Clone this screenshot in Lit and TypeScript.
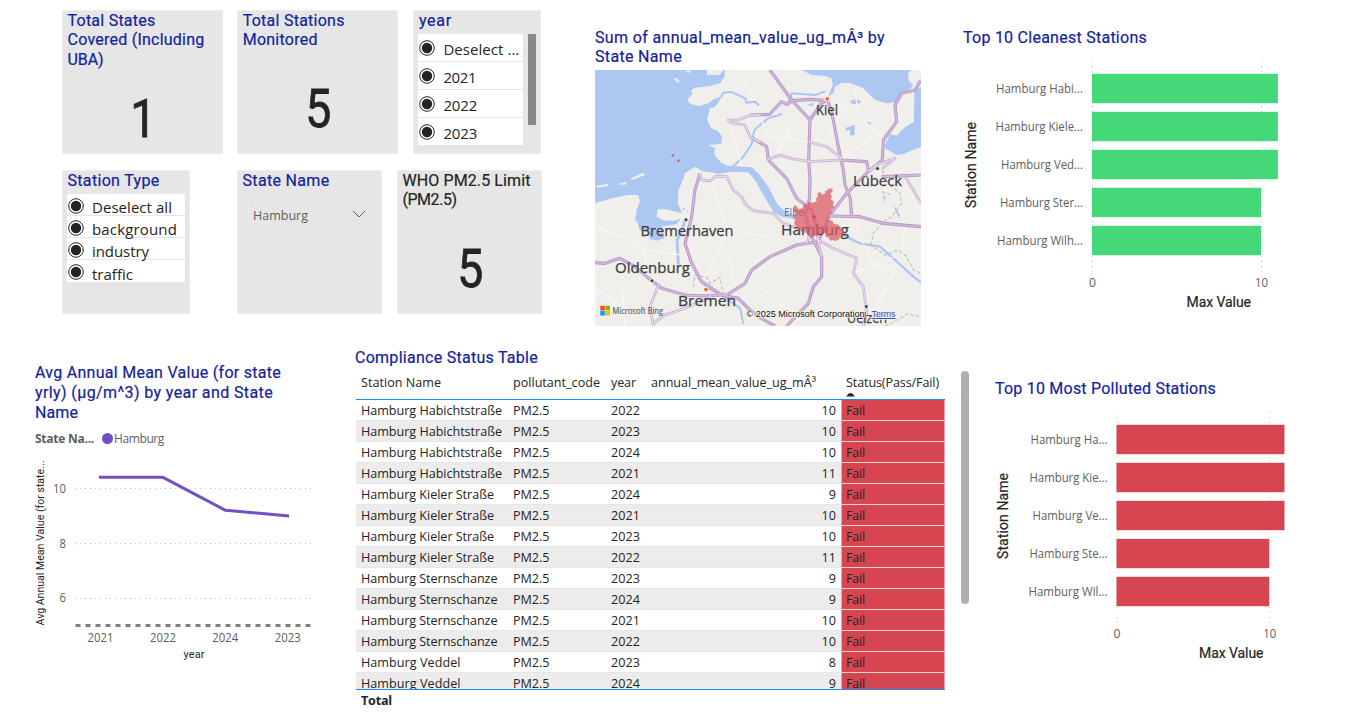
import { LitElement, html, svg, css } from "lit";
import { customElement, property, state } from "lit/decorators.js";
import { classMap } from "lit/directives/class-map.js";

/** One line of text whose tracking is adjusted so that it spans `w` pixels. */
@customElement("fit-line")
class FitLine extends LitElement {
  @property({ type: Number }) w = 0;
  static styles = css`
    :host { display: block; white-space: pre; overflow: visible; }
    .line { display: inline-block; }
  `;
  render() {
    return html`<span class="line"><slot></slot></span>`;
  }
  firstUpdated() {
    const line = this.renderRoot.querySelector(".line") as HTMLElement;
    const count = (this.textContent ?? "").length;
    const natural = line.getBoundingClientRect().width;
    if (count && this.w) line.style.letterSpacing = `${(this.w - natural) / count}px`;
  }
}

@customElement("kpi-card")
class KpiCard extends LitElement {
  @property({ attribute: false }) lines: [string, number][] = [];
  @property() value = "";
  @property({ type: Boolean }) dark = false;
  static styles = css`
    :host { display: flex; flex-direction: column; box-sizing: border-box; height: 144px;
      background: #e6e6e6; border: 1px solid #ededed; font-family: Roboto, sans-serif; }
    .title { padding: 0 4.5px; font-size: 16px; line-height: 19.4px; color: #12239e; -webkit-text-stroke: .2px; }
    .dark { color: #252423; }
    .value { flex: 1; display: flex; align-items: center; justify-content: center; padding: 16px 0 0 1px;
      font-size: 54px; line-height: 54px; color: #252423; }
    .digit { display: block; transform: scaleX(.86); -webkit-text-stroke: .8px; }
  `;
  render() {
    return html`<div class=${classMap({ title: true, dark: this.dark })}>
        ${this.lines.map(([t, w]) => html`<fit-line w=${w}>${t}</fit-line>`)}
      </div>
      <div class="value"><span class="digit">${this.value}</span></div>`;
  }
}

@customElement("slicer-list")
class SlicerList extends LitElement {
  @property() heading = "";
  @property({ type: Number }) headingWidth = 0;
  @property({ attribute: false }) items: [string, number][] = [];
  @property({ type: Boolean, reflect: true }) compact = false;
  static styles = css`
    :host { display: block; box-sizing: border-box; height: 144px; width: 128px;
      background: #e6e6e6; border: 1px solid #ededed; }
    .title { padding: 0 4.5px; font: 16px/19.4px Roboto, sans-serif; color: #12239e; -webkit-text-stroke: .2px; }
    .body { display: flex; gap: 5px; padding: 4px 4px 0 4px; }
    .list { width: 105px; }
    .item { height: 28px; box-sizing: border-box; border-bottom: 1px solid #e6e6e6; background: #fff;
      display: flex; align-items: center; gap: 8px; padding-left: 1px;
      font: 15px/20px 'Open Sans', sans-serif; color: #252423; }
    .label { padding-top: 3px; }
    .thumb { width: 8px; height: 91px; background: #8a8886; }
    .compact .list { width: 118px; }
    .compact .item { height: 22px; padding-top: 2px; }
    .compact .item:last-child { height: 23px; }
    .radio { flex: none; }
  `;
  render() {
    return html`<div class="title"><fit-line w=${this.headingWidth}>${this.heading}</fit-line></div>
      <div class=${classMap({ body: true, compact: this.compact })}>
        <div class="list">
          ${this.items.map(([t, w]) => html`<div class="item">
            <svg class="radio" width="16" height="16" viewBox="0 0 16 16">
              <circle cx="8" cy="8" r="7.3" fill="#fff" stroke="#252423" stroke-width="1"></circle>
              <circle cx="8" cy="8" r="5.2" fill="#252423"></circle>
            </svg>
            <fit-line class="label" w=${w}>${t}</fit-line>
          </div>`)}
        </div>
        ${this.compact ? "" : html`<div class="thumb"></div>`}
      </div>`;
  }
}

const roads = [
  "M525 0L590 90L645 150L641 270L645 330L643 390L630 430L645 490L680 560L680 620L655 650L640 700L575 768",
  "M465 135L525 133L540 115L560 95L575 103L595 92L645 88L695 92L680 98L645 150",
  "M700 95L715 150L728 220L745 300L750 345L766 385L770 440",
  "M978 30L960 60L920 70L900 105L905 155L865 210L862 270L820 305L755 370L705 435L670 515L605 525L525 560L470 600L450 640L395 675L380 675L320 635L290 580L270 520L290 440L300 360L315 310",
  "M380 675L330 678L270 675L200 655L155 620L120 590L75 565L30 580L0 578",
  "M465 200L515 230L520 270L575 325L605 385L650 420L670 490",
  "M705 438L795 440L865 460L978 470",
  "M860 320L978 315",
  "M380 675L430 685L460 715L490 740L540 768",
  "M735 270L815 275L820 300",
];
const minorRoads = [
  "M515 270L555 255L595 267L645 275L735 270",
  "M643 215L695 230L740 265",
  "M495 135L460 138L430 150L400 150L405 158L450 165L465 200L495 215",
  "M315 310L320 330L345 333L360 320L395 320L415 360L440 380L450 400L470 420L495 425L535 430L565 460L620 480L650 490",
  "M190 645L165 710L175 768M175 760L210 735L270 715L350 680",
  "M670 510L715 535L785 565L775 610L805 650L815 730L805 768",
  "M820 305L845 285L900 265L890 275L860 295",
  "M930 320L955 360L978 400",
  "M635 520L645 490L665 490L680 560",
];
const whiteRoads = "M0 470L80 500L150 540L155 620M150 540L300 560M0 650L120 740M80 660L90 768M350 330L400 480L340 610M400 480L520 500M480 640L560 700L600 768M400 560L420 650M500 150L520 200L640 215M595 160L540 260M760 100L700 190M800 150L860 200M780 60L790 140M735 270L850 190M700 640L900 560M900 600L850 700L870 768M700 600L600 640M780 450L830 580L900 600M930 470L920 560M440 20L480 90M410 180L440 290";

@customElement("state-map")
class StateMap extends LitElement {
  static styles = css`
    :host { display: block; }
    .map { display: block; }
    .city { font-family: 'Open Sans', sans-serif; fill: #404040; stroke: #404040; stroke-width: .25px; }
    .water { font-family: 'Open Sans', sans-serif; fill: #4673bd; }
    .legal { font-family: 'Liberation Sans', sans-serif; font-size: 9.3px; fill: #111; stroke: #f4f3f0; stroke-width: 1.6px; paint-order: stroke; }
    .terms { fill: #2149b8; text-decoration: underline; }
    .logo { font-family: 'Open Sans', sans-serif; font-size: 8.5px; fill: #666; stroke: #666; stroke-width: .2px; }
  `;
  render() {
    const city = (x: number, y: number, w: number, t: string) =>
      svg`<text class="city" x=${x} y=${y} textLength=${w} lengthAdjust="spacingAndGlyphs" font-size="14">${t}</text>`;
    return html`<svg class="map" width="326" height="256" viewBox="0 0 978 768">
      <rect width="978" height="768" fill="#f0efec"></rect>
      <g fill="#acc7f2">
        <path d="M0 0H390L388 20L375 40L350 47L300 53L288 62L292 72L278 88L282 100L310 108L340 100L355 88L378 80L372 95L358 112L345 115L336 150L348 175L368 182L382 200L378 222L340 225L360 235L358 255L380 280L400 288L450 290L470 292L490 310L520 350L545 400L570 425L600 436L598 446L560 440L535 425L505 375L480 330L460 307L410 305L370 312L340 305L325 305L300 290L270 310L264 330L250 360L248 400L262 430L245 425L210 418L188 418L185 440L210 452L240 452L258 445L245 462L200 470L205 482L208 505L185 512L165 508L160 485L133 480L128 455L120 450L125 420L135 395L130 375L100 375L50 385L0 400Z"></path>
        <path d="M620 0L650 15L690 18L710 25L713 45L700 80L715 70L720 50L740 38L765 38L805 55L840 90L875 100L905 95L920 65L943 58L955 48L940 30L940 10L950 0Z"></path>
        <path d="M958 62L978 50V230L940 246L925 252L905 255L870 235L870 225L885 192L905 197L930 172L957 155Z"></path>
        <path d="M765 93L785 87L800 95L785 103L770 101ZM752 173L780 165L778 195L765 197L765 180L752 182ZM814 155L830 158L826 165ZM635 105L655 98L655 108ZM895 405L915 435L912 445L900 420ZM865 375L872 380L868 398Z"></path>
      </g>
      <g fill="none" stroke="#acc7f2" stroke-linecap="round" stroke-linejoin="round">
        <path stroke-width="9" d="M270 450L260 485L246 510L250 580"></path>
        <path stroke-width="6" d="M378 82L385 68L410 66L430 75L450 85L455 98L480 95L490 105M415 288L445 260L470 222L478 180L495 165L520 145L560 132M310 625L340 655L380 675L435 715L445 760M580 95L590 70L620 72L660 75L690 65"></path>
        <path stroke-width="7" d="M742 495L795 520L855 530L895 565L955 620L978 637"></path>
      </g>
      <g fill="#f0efec">
        <path d="M336 0H385L375 14L336 16ZM236 23Q248 22 254 36L246 38ZM5 347L40 341L38 349L5 353ZM65 343L95 337L93 344ZM108 325L145 308L150 315L112 330ZM270 4L290 1L282 9Z"></path>
      </g>
      <path d=${whiteRoads} fill="none" stroke="#f8f7f6" stroke-width="4"></path>
      <path d="M262 415L280 425M295 650L300 615L335 622L345 640L375 622L385 670M862 300L880 340L915 370L920 400L890 440L865 455L835 490L828 525M790 520L828 525L870 555L910 540L935 560L955 600L978 610M860 365L890 375M870 768L915 745L935 732L978 740" fill="none" stroke="#c4c1ba" stroke-width="3.5" stroke-dasharray="11 6"></path>
      <g fill="none" stroke-linejoin="round">
        ${roads.map((d) => svg`<path d=${d} stroke="#b795c7" stroke-width="9.5"></path>`)}
        ${minorRoads.map((d) => svg`<path d=${d} stroke="#c3a8d0" stroke-width="8"></path>`)}
        ${roads.map((d) => svg`<path d=${d} stroke="#d3bcdc" stroke-width="4"></path>`)}
        ${minorRoads.map((d) => svg`<path d=${d} stroke="#eadff0" stroke-width="3.6"></path>`)}
      </g>
      <g transform="translate(-1785 -210) scale(3)">
        ${city(816, 115, 22, "Kiel")}
        ${city(853, 185.5, 49, "Lübeck")}
        ${city(640.5, 236, 93, "Bremerhaven")}
        ${city(615, 273, 75, "Oldenburg")}
        ${city(678, 306, 58, "Bremen")}
        ${city(781, 234.5, 68, "Hamburg")}
        ${city(847, 322.5, 40, "Uelzen")}
        <text class="water" x="784" y="216" font-size="10" textLength="20" lengthAdjust="spacingAndGlyphs">Elbe</text>
        <g fill="#444" stroke="#f7f6f4" stroke-width=".8">
          <circle cx="877.5" cy="168.6" r="2"></circle><circle cx="686" cy="219.8" r="2"></circle>
          <circle cx="652" cy="280.8" r="2"></circle><circle cx="866.3" cy="306.6" r="2"></circle>
        </g>
        <g fill="#f26b2e" stroke="#fff" stroke-width="1">
          <circle cx="827.3" cy="99" r="2.4"></circle><circle cx="706" cy="289.5" r="2.4"></circle>
        </g>
      </g>
      <path d="M594 412L602 406L612 418L622 415L628 402L637 404L640 396L652 398L665 394L663 386L669 378L667 370L675 366L682 374L691 370L690 362L698 362L697 357L712 355L713 364L706 372L711 380L707 387L717 396L713 404L719 414L709 418L711 428L702 434L704 442L699 449L712 452L717 462L731 464L735 474L745 480L747 492L735 498L733 508L722 513L712 510L706 512L700 502L692 500L691 488L680 492L672 490L668 498L658 497L653 504L644 500L640 490L632 488L627 480L610 482L606 470L597 462L601 450L594 442L602 432L597 424Z" fill="#de5a67" fill-opacity=".74"></path>
      <circle cx="657" cy="440" r="5" fill="#ee3b34"></circle>
      <path d="M228 258L237 250L236 260ZM246 270L255 269L253 276L247 275Z" fill="#d9536b"></path>
      <g transform="translate(-1785 -210) scale(3)">
        <path fill="#f25022" d="M600.3 305.8h4.6v4.6h-4.6z"></path><path fill="#7fba00" d="M605.4 305.8h4.6v4.6h-4.6z"></path>
        <path fill="#00a4ef" d="M600.3 310.9h4.6v4.6h-4.6z"></path><path fill="#ffb900" d="M605.4 310.9h4.6v4.6h-4.6z"></path>
        <text class="logo" x="612.5" y="314" textLength="50.5" lengthAdjust="spacingAndGlyphs">Microsoft Bing</text>
        <text class="legal" x="746.5" y="317" textLength="118" lengthAdjust="spacingAndGlyphs">© 2025 Microsoft Corporation</text>
        <text class="legal terms" x="871.5" y="317" textLength="24" lengthAdjust="spacingAndGlyphs">Terms</text>
      </g>
    </svg>`;
  }
}

@customElement("bar-chart")
class BarChart extends LitElement {
  /** label, label width, value */
  @property({ attribute: false }) rows: [string, number, number][] = [];
  @property() color = "";
  @property({ type: Number }) axis = 0;
  @property({ type: Number }) unit = 0;
  @property({ type: Number }) captionX = 0;
  static styles = css`
    :host { display: block; }
    .chart { display: block; overflow: visible; }
    .tick { font: 12px 'Open Sans', sans-serif; fill: #605e5c; }
    .caption { font: 14px Roboto, sans-serif; fill: #252423; stroke: #252423; stroke-width: .2px; }
    .grid { stroke: #c8c6c4; stroke-width: 1; stroke-dasharray: 1 4; }
  `;
  render() {
    const a = this.axis, b = a + this.unit * 10;
    return html`<svg class="chart" width="330" height="260" viewBox="0 0 330 260">
      <line class="grid" x1=${a + 0.5} x2=${a + 0.5} y1="1" y2="212"></line>
      <line class="grid" x1=${b + 0.5} x2=${b + 0.5} y1="1" y2="212"></line>
      ${this.rows.map(([t, w, v], i) => svg`
        <text class="tick" x=${a - 9 - w} y=${33 + i * 38} textLength=${w} lengthAdjust="spacingAndGlyphs">${t}</text>
        <rect x=${a} y=${13.8 + i * 38} width=${this.unit * v} height="29.4" fill=${this.color}></rect>`)}
      <text class="tick" x=${a - 3} y="227" textLength="7" lengthAdjust="spacingAndGlyphs">0</text>
      <text class="tick" x=${b - 6} y="227" textLength="13" lengthAdjust="spacingAndGlyphs">10</text>
      <text class="caption" x=${this.captionX} y="246.5" textLength="64.5">Max Value</text>
      <text class="caption" transform="translate(13 148) rotate(-90)" textLength="86">Station Name</text>
    </svg>`;
  }
}

@customElement("line-chart")
class LineChart extends LitElement {
  static styles = css`
    :host { display: block; }
    .chart { display: block; }
    .tick { font: 12px 'Open Sans', sans-serif; fill: #605e5c; }
    .caption { font: 11px Roboto, sans-serif; fill: #252423; }
  `;
  render() {
    return html`<svg class="chart" width="300" height="215" viewBox="30 455 300 215">
      <g stroke="#c8c6c4" stroke-width="1" stroke-dasharray="1 4">
        <path d="M75 488.5H312M75 543.5H312M75 598.5H312"></path>
      </g>
      <path d="M75.5 625.5H311" stroke="#808080" stroke-width="3" stroke-dasharray="5 5"></path>
      <path d="M100.5 477.3H163L225.5 510.3L287.5 515.8" fill="none" stroke="#744ec2" stroke-width="3" stroke-linejoin="round" stroke-linecap="square"></path>
      <text class="tick" x="53" y="493" textLength="13" lengthAdjust="spacingAndGlyphs">10</text>
      <text class="tick" x="59.5" y="548" textLength="6.5" lengthAdjust="spacingAndGlyphs">8</text>
      <text class="tick" x="59.5" y="602" textLength="6.5" lengthAdjust="spacingAndGlyphs">6</text>
      ${["2021", "2022", "2024", "2023"].map((t, i) => svg`
        <text class="tick" x=${87.5 + i * 62.4} y="642" textLength="26" lengthAdjust="spacingAndGlyphs">${t}</text>`)}
      <text class="caption" x="183.5" y="658" textLength="21">year</text>
      <text class="caption" transform="translate(44 625.5) rotate(-90)" textLength="165" lengthAdjust="spacingAndGlyphs">Avg Annual Mean Value (for state...</text>
    </svg>`;
  }
}

const STATIONS: Record<string, [string, number]> = {
  h: ["Hamburg Habichtstraße", 141],
  k: ["Hamburg Kieler Straße", 133],
  s: ["Hamburg Sternschanze", 136.5],
  v: ["Hamburg Veddel", 99.5],
};

@customElement("status-table")
class StatusTable extends LitElement {
  @state() private rows: [string, string, string][] = [
    ["h", "2022", "10"], ["h", "2023", "10"], ["h", "2024", "10"], ["h", "2021", "11"],
    ["k", "2024", "9"], ["k", "2021", "10"], ["k", "2023", "10"], ["k", "2022", "11"],
    ["s", "2023", "9"], ["s", "2024", "9"], ["s", "2021", "10"], ["s", "2022", "10"],
    ["v", "2023", "8"], ["v", "2024", "9"],
  ];
  static styles = css`
    :host { display: block; font: 12.6px/20px 'Open Sans', sans-serif; color: #252423; }
    .wrap { display: flex; gap: 16px; }
    .table { width: 589px; }
    .row { display: grid; grid-template-columns: 152px 98px 40px 195px 104px; height: 21px; box-sizing: border-box; }
    .head { height: 28px; }
    .cell { padding-left: 5px; border-bottom: 1px solid #e6e6e6; line-height: 21px; height: 20px; }
    .head .cell { border: 0; padding-top: 1px; }
    .rows { height: 288.6px; overflow: hidden; border-top: 1px solid #118dff; border-bottom: 1px solid #118dff; }
    .rows .row:nth-child(even) { background: #ececec; }
    .num { display: flex; justify-content: flex-end; padding-right: 5px; }
    .status { background: #d64550; border-left: 1px solid #eba2a8; border-right: 1px solid #eba2a8; border-bottom-color: #f0d4d6; padding-left: 4px; }
    .total { font-weight: 700; padding-left: 5px; line-height: 21px; }
    .arrow { display: block; width: 9px; height: 5px; margin-top: -1px; }
    .thumb { width: 7.5px; height: 233px; border-radius: 4px; background: #b0aeac; }
  `;
  render() {
    return html`<div class="wrap"><div class="table">
      <div class="row head">
        <div class="cell"><fit-line w="80">Station Name</fit-line></div>
        <div class="cell"><fit-line w="87">pollutant_code</fit-line></div>
        <div class="cell"><fit-line w="25">year</fit-line></div>
        <div class="cell"><fit-line w="165">annual_mean_value_ug_mÂ³</fit-line></div>
        <div class="cell"><fit-line w="93">Status(Pass/Fail)</fit-line>
          <svg class="arrow" viewBox="0 0 9 5"><path d="M0 4.5L3 1.2H6L9 4.5Z" fill="#252423"></path></svg>
        </div>
      </div>
      <div class="rows">${this.rows.map(([s, y, v]) => html`<div class="row">
        <div class="cell"><fit-line w=${STATIONS[s][1]}>${STATIONS[s][0]}</fit-line></div>
        <div class="cell"><fit-line w="36.5">PM2.5</fit-line></div>
        <div class="cell"><fit-line w="29">${y}</fit-line></div>
        <div class="cell num"><fit-line w=${v.length * 7.2}>${v}</fit-line></div>
        <div class="cell status"><fit-line w="19">Fail</fit-line></div>
      </div>`)}</div>
      <div class="total"><fit-line w="31">Total</fit-line></div>
    </div><div class="thumb"></div></div>`;
  }
}

@customElement("app-root")
class AppRoot extends LitElement {
  static styles = css`
    :host { display: block; width: 1345px; height: 714px; overflow: hidden; background: #fff; }
    .top { display: flex; height: 340px; box-sizing: border-box; padding: 10px 0 0 62px; }
    .cards { width: 480px; display: flex; flex-direction: column; gap: 16px; }
    .line1 { display: grid; grid-template-columns: 160.6px 160.6px 128px; column-gap: 14.6px; }
    .last { margin-left: 1px; }
    .line2 { display: grid; grid-template-columns: 128.5px 176.5px 145px; column-gap: 15px; }
    .shift { margin-left: 31.5px; }
    .panel { background: #e6e6e6; border: 1px solid #ededed; box-sizing: border-box; }
    .title { font: 16px/19.4px Roboto, sans-serif; color: #12239e; -webkit-text-stroke: .2px; }
    .panel .title { padding: 0 4.5px; }
    .drop { margin: 9px 9px 0 10px; height: 28px; box-sizing: border-box; border: 1px solid #e9e9e9;
      display: flex; align-items: center; justify-content: space-between; padding: 5px 5px 0 4px;
      font: 12.5px/18px 'Open Sans', sans-serif; color: #605e5c; }
    .chevron { margin-top: -3px; }
    .map { margin-left: 53px; padding-top: 18px; width: 326px; }
    .map .title { margin-bottom: 3.2px; }
    .clean { margin-left: 42px; padding-top: 18px; }
    .clean bar-chart { margin-top: 13px; }
    .bottom { display: flex; height: 374px; }
    .trend { flex: none; width: 355px; padding: 22.5px 0 0 35px; box-sizing: border-box; }
    .tall { line-height: 20px; }
    .legend { display: flex; align-items: center; gap: 8px; margin-top: 7px; height: 18px; font: 12px/18px 'Open Sans', sans-serif; color: #605e5c; }
    .strong { font-weight: 700; }
    .key { display: flex; align-items: center; gap: 1px; }
    .dot { width: 11px; height: 11px; border-radius: 50%; background: #744ec2; }
    .trend line-chart { margin: 7px 0 0 -5px; }
    .compliance { flex: none; width: 640px; padding-top: 8px; }
    .compliance status-table { margin: 4px 0 0 1px; }
    .polluted { flex: none; padding-top: 39px; }
    .polluted bar-chart { margin-top: 13px; }
  `;
  render() {
    return html`
      <section class="top">
        <div class="cards">
          <div class="line1">
            <kpi-card value="1" .lines=${[["Total States", 88], ["Covered (Including", 137], ["UBA)", 36]]}></kpi-card>
            <kpi-card value="5" .lines=${[["Total Stations", 102], ["Monitored", 75]]}></kpi-card>
            <slicer-list class="last" heading="year" headingWidth="33"
              .items=${[["Deselect ...", 76], ["2021", 33], ["2022", 34], ["2023", 34]]}></slicer-list>
          </div>
          <div class="line2">
            <slicer-list compact heading="Station Type" headingWidth="92"
              .items=${[["Deselect all", 80], ["background", 85], ["industry", 57], ["traffic", 41]]}></slicer-list>
            <div class="panel shift">
              <div class="title"><fit-line w="87">State Name</fit-line></div>
              <div class="drop"><fit-line w="55">Hamburg</fit-line>
                <svg class="chevron" width="14" height="8" viewBox="0 0 14 8"><path d="M1 1L7 7L13 1" fill="none" stroke="#605e5c"></path></svg>
              </div>
            </div>
            <kpi-card dark value="5" .lines=${[["WHO PM2.5 Limit", 128], ["(PM2.5)", 54]]}></kpi-card>
          </div>
        </div>
        <div class="map">
          <div class="title"><fit-line w="290">Sum of annual_mean_value_ug_mÂ³ by</fit-line><fit-line w="87">State Name</fit-line></div>
          <state-map></state-map>
        </div>
        <div class="clean">
          <div class="title"><fit-line w="184">Top 10 Cleanest Stations</fit-line></div>
          <bar-chart color="#44d878" axis="129" unit="16.9" captionX="223.5"
            .rows=${[["Hamburg Habi...", 87, 11], ["Hamburg Kiele...", 87.5, 11], ["Hamburg Ved...", 82, 11], ["Hamburg Ster...", 83, 10], ["Hamburg Wilh...", 86, 10]]}></bar-chart>
        </div>
      </section>
      <section class="bottom">
        <div class="trend">
          <div class="title tall"><fit-line w="246">Avg Annual Mean Value (for state</fit-line><fit-line w="238">yrly) (µg/m^3) by year and State</fit-line><fit-line w="43">Name</fit-line></div>
          <div class="legend"><fit-line class="strong" w="59">State Na...</fit-line>
            <span class="key"><span class="dot"></span><fit-line w="50">Hamburg</fit-line></span></div>
          <line-chart></line-chart>
        </div>
        <div class="compliance">
          <div class="title"><fit-line w="183">Compliance Status Table</fit-line></div>
          <status-table></status-table>
        </div>
        <div class="polluted">
          <div class="title"><fit-line w="221">Top 10 Most Polluted Stations</fit-line></div>
          <bar-chart color="#d64550" axis="121.5" unit="15.27" captionX="204"
            .rows=${[["Hamburg Ha...", 77, 11], ["Hamburg Kie...", 78, 11], ["Hamburg Ve...", 75, 11], ["Hamburg Ste...", 78, 10], ["Hamburg Wil...", 79, 10]]}></bar-chart>
        </div>
      </section>`;
  }
}
